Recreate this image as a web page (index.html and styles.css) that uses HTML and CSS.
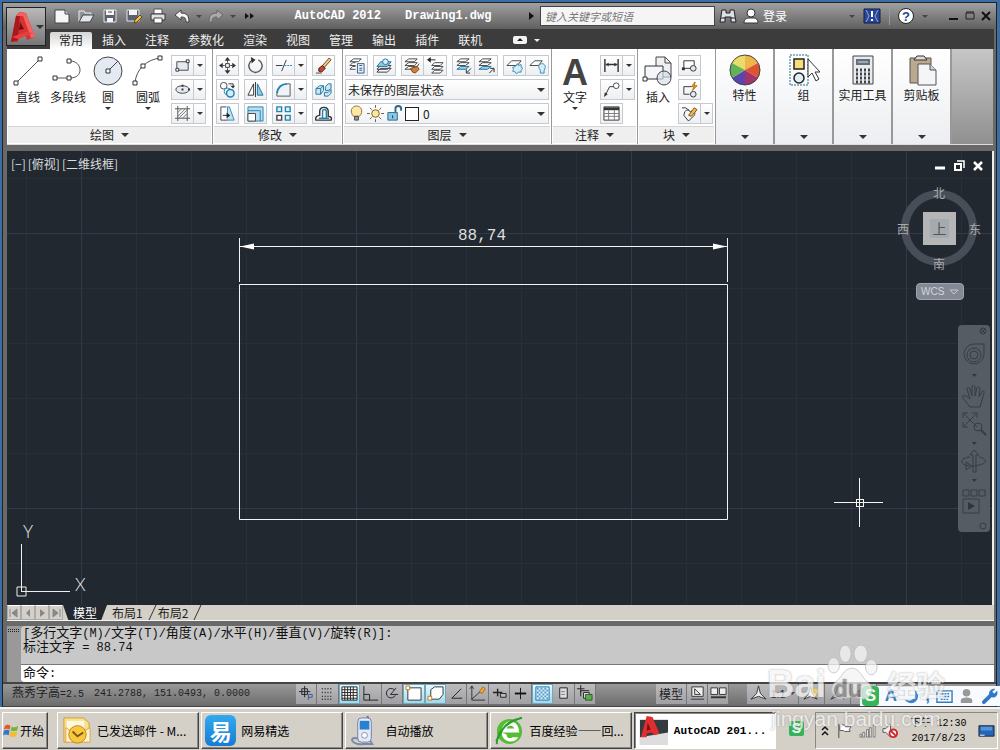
FILE: index.html
```
<!DOCTYPE html>
<html lang="zh-CN">
<head>
  <meta charset="UTF-8" />
  <meta name="viewport" content="width=device-width, initial-scale=1.0"/>
  <title>AutoCAD 2012 Drawing1.dwg</title>
  <link rel="stylesheet" href="styles.css">
</head>
<body>
  <div class="window">
    <header class="titlebar">
      <div class="quick">
        <button aria-label="新建"><svg viewBox="0 0 18 18"><path d="M2 3h10l4 4v9H2z" fill="#f4f6f8" stroke="#444"/><path d="M12 3v4h4" fill="#cdd3da" stroke="#444"/></svg></button>
        <button aria-label="打开"><svg viewBox="0 0 18 18"><path d="M2 15V4h5l1 2h6v3" fill="#8d949c" stroke="#eee"/><path d="M2 15l4-7h11l-4 7z" fill="#e3e6ea" stroke="#444"/></svg></button>
        <button aria-label="保存"><svg viewBox="0 0 18 18"><path d="M3 3h12v12H3z" fill="#59626e" stroke="#dfe3e8"/><path d="M5 3h8v5H5zM6 11h6v4H6z" fill="#f5f5f5"/><path d="M7 5h4" stroke="#555"/></svg></button>
        <button aria-label="另存为"><svg viewBox="0 0 18 18"><path d="M2 3h12v11H2z" fill="#59626e" stroke="#dfe3e8"/><path d="M4 3h8v5H4z" fill="#f5f5f5"/><path d="M9 16l1-3 5-5 2 2-5 5z" fill="#f2bd4a" stroke="#6b4a10"/></svg></button>
        <button aria-label="打印"><svg viewBox="0 0 18 18"><path d="M5 2h8v5H5z" fill="#fff" stroke="#555"/><path d="M2 7h14v6H2z" fill="#dfe2e5" stroke="#333"/><path d="M5 11h8v5H5z" fill="#fff" stroke="#444"/></svg></button>
        <button aria-label="放弃"><svg viewBox="0 0 18 18"><path d="M2 8l6-5v3c6 0 8 3 8 9h-3c0-4-1-5-5-5v3z" fill="#f4f4f4" stroke="#444"/></svg></button>
        <i class="arrow dim"></i>
        <button aria-label="重做"><svg viewBox="0 0 18 18"><path d="M16 8l-6-5v3c-6 0-8 3-8 9h3c0-4 1-5 5-5v3z" fill="#aaa" stroke="#666"/></svg></button>
        <i class="arrow dim"></i>
        <button class="more" aria-label="更多"><svg viewBox="0 0 18 18"><path d="M6 6l4 3-4 3zM11 6l4 3-4 3z" fill="#111"/></svg></button>
      </div>
      <h1><span>AutoCAD 2012</span><span>Drawing1.dwg</span></h1>
      <form class="search">
        <i class="arrow-right"></i>
        <input type="search" placeholder="键入关键字或短语" aria-label="搜索">
      </form>
      <div class="account">
        <button aria-label="查找"><svg viewBox="0 0 18 18"><path d="M3 3h4v3h4V3h4l2 12h-5v-5H6v5H1z" fill="#dbe0e6" stroke="#222"/><path d="M2 11h4M12 11h4" stroke="#222"/></svg></button>
        <button class="login"><svg viewBox="0 0 18 18"><path d="M2 16c0-4 3-5 5-5h4c2 0 5 1 5 5z" fill="#fff" stroke="#333"/><circle cx="9" cy="6" r="4" fill="#fff" stroke="#333"/></svg>登录</button>
      </div>
      <div class="help">
        <i class="arrow dim"></i>
        <button aria-label="交换"><svg viewBox="0 0 18 18"><path d="M1 2h16v14H1z" fill="#294796" stroke="#111c44"/><path d="M3 3l3 6-3 6M15 3l-3 6 3 6" fill="none" stroke="#89a6df"/><path d="M9 4v6M9 12v2" stroke="#fff" stroke-width="2"/></svg></button>
        <i class="sep"></i>
        <button class="question" aria-label="帮助">?</button>
        <i class="arrow dim"></i>
      </div>
      <div class="winctl">
        <button aria-label="最小化"><svg viewBox="0 0 12 12"><path d="M1 9h9" stroke="#111" stroke-width="2"/></svg></button>
        <button aria-label="最大化"><svg viewBox="0 0 12 12"><path d="M2 3h8v6H2zM2 2h8" fill="none" stroke="#222"/></svg></button>
        <button aria-label="关闭"><svg viewBox="0 0 12 12"><path d="M2 2l8 8M10 2l-8 8" stroke="#111" stroke-width="2"/></svg></button>
      </div>
    </header>

    <button class="appbtn" aria-label="应用程序菜单">
      <svg viewBox="0 0 28 34"><path d="M3 32L8 6l4-4 6 1 9 24-8 3-2-6-6 1-1 7z" fill="#d93033"/><path d="M3 32L8 6l4-4-2 28z" fill="#a8191d"/><path d="M12 12l4 7-5 1z" fill="#6d0e12"/><path d="M8 6l4-4 6 1 9 24-4 1L15 6z" fill="#f56360"/><path d="M4 27l14-5 7 1-15 6z" fill="#e9403f"/></svg>
      <i class="arrow"></i>
    </button>

    <nav class="menu">
      <a href="#" class="active">常用</a><a href="#">插入</a><a href="#">注释</a><a href="#">参数化</a><a href="#">渲染</a><a href="#">视图</a><a href="#">管理</a><a href="#">输出</a><a href="#">插件</a><a href="#">联机</a>
      <button aria-label="最小化功能区"><svg viewBox="0 0 14 8"><rect width="14" height="8" rx="2" fill="#f2f2f2"/><path d="M7 2l3 3H4z" fill="#222"/></svg></button>
      <i class="arrow light"></i>
    </nav>

    <main class="ribbon">
      <section class="panel draw">
        <div class="tools">
          <button class="big"><svg viewBox="0 0 32 32"><path d="M4 28L28 4" stroke="#555"/><path d="M2 26h4v4H2zM26 2h4v4h-4z" fill="#fff" stroke="#333"/></svg>直线</button>
          <button class="big"><svg viewBox="0 0 32 32"><path d="M3 23h15c6 0 10-3 10-8s-4-9-10-9" fill="none" stroke="#555"/><path d="M1 21h4v4H1zM15 21h4v4h-4zM15 4h4v4h-4z" fill="#fff" stroke="#333"/></svg>多段线</button>
          <button class="big"><svg viewBox="0 0 32 32"><circle cx="16" cy="16" r="14" fill="#e4eaf1" stroke="#444"/><path d="M16 16l10-10" stroke="#444"/><path d="M14 14h4v4h-4z" fill="#fff" stroke="#333"/></svg>圆<i class="arrow small"></i></button>
          <button class="big"><svg viewBox="0 0 32 32"><path d="M3 28C4 14 15 4 29 3" fill="none" stroke="#555"/><path d="M1 26h4v4H1zM9 9h4v4H9zM26 1h4v4h-4z" fill="#fff" stroke="#333"/></svg>圆弧<i class="arrow small"></i></button>
          <div class="stack">
            <button class="split" aria-label="矩形"><svg viewBox="0 0 18 18"><path d="M3 5h12v9H3z" fill="#e4eaf1" stroke="#444"/><path d="M2 12h3v3H2zM13 3h3v3h-3z" fill="#fff" stroke="#333"/></svg><i class="arrow small"></i></button>
            <button class="split" aria-label="椭圆"><svg viewBox="0 0 18 18"><ellipse cx="9" cy="9" rx="7" ry="4" fill="#e4eaf1" stroke="#444"/><path d="M8 8h2v2H8zM15 8h2v2h-2zM8 4h2v2H8z" fill="#333"/></svg><i class="arrow small"></i></button>
            <button class="split" aria-label="填充"><svg viewBox="0 0 18 18"><path d="M4 1v16M14 1v16M1 4h16M1 14h16" stroke="#555"/><path d="M4 8l4-4M4 12l8-8M5 14l9-9M9 14l5-5" stroke="#777"/></svg><i class="arrow small"></i></button>
          </div>
        </div>
        <footer>绘图<i class="arrow"></i></footer>
      </section>

      <section class="panel modify">
        <div class="tools grid">
          <button aria-label="移动"><svg viewBox="0 0 18 18"><path d="M9 0l3 4H6zM9 18l3-4H6zM0 9l4-3v6zM18 9l-4-3v6z" fill="#333"/><path d="M7 7h4v4H7z" fill="#fff" stroke="#333"/><path d="M9 4v2M9 12v2M4 9h2M12 9h2" stroke="#333"/></svg></button>
          <button aria-label="旋转"><svg viewBox="0 0 18 18"><path d="M12 3a7 7 0 1 1-6 0" fill="none" stroke="#555" stroke-width="1.500"/><path d="M4 0l5 3-4 4z" fill="#333"/></svg></button>
          <button class="split" aria-label="修剪"><svg viewBox="0 0 18 18"><path d="M1 9h7M12 3L7 15" stroke="#334"/><path d="M10 9h8" stroke="#2a7db0" stroke-dasharray="2 1"/></svg><i class="arrow small"></i></button>
          <button aria-label="删除"><svg viewBox="0 0 18 18"><path d="M8 9l7-8 2 2-7 8z" fill="#ecc983" stroke="#65461d"/><path d="M4 12l4-3 3 3-4 4-3-1z" fill="#c2452c" stroke="#541b11"/><path d="M1 17h6" stroke="#444"/></svg></button>
          <button aria-label="复制"><svg viewBox="0 0 18 18"><circle cx="5" cy="5" r="3.500" fill="#fff" stroke="#444"/><circle cx="9" cy="11" r="3.500" fill="#fff" stroke="#2582af"/><circle cx="12" cy="13" r="4" fill="#d5edf7" stroke="#2582af" stroke-width="1.500"/><path d="M10 3h5v3" fill="none" stroke="#333"/><path d="M12 5h5l-2 3z" fill="#333"/></svg></button>
          <button aria-label="镜像"><svg viewBox="0 0 18 18"><path d="M7 3v12H1z" fill="#fff" stroke="#333"/><path d="M11 3v12h6z" fill="#8fcce6" stroke="#21719c"/><path d="M9 1v16" stroke="#333"/></svg></button>
          <button class="split" aria-label="圆角"><svg viewBox="0 0 18 18"><path d="M2 16V13C3 7 7 3 14 3h2v13z" fill="#eef3f7"/><path d="M2 13C3 7 7 3 13 3" fill="none" stroke="#2480ad" stroke-width="2"/><path d="M13 3h3v13H2v-3" fill="none" stroke="#555"/></svg><i class="arrow small"></i></button>
          <button aria-label="分解"><svg viewBox="0 0 18 18"><path d="M1 8l4-3h4v5l-3 4H1zM1 8h5v6M6 8l3-3M11 6l3-3h3v5l-3 2h-3zM10 12h4l3-3v4l-3 3h-4z" fill="#c8e8f5" stroke="#24749f"/></svg></button>
          <button aria-label="拉伸"><svg viewBox="0 0 18 18"><path d="M11 2l5 14H9V2z" fill="#c4e3f2" stroke="#318bb7"/><path d="M8 2H2v14h7" fill="#fff" stroke="#444"/><path d="M4 11h6" stroke="#222"/><path d="M8 8l4 3-4 3z" fill="#222"/></svg></button>
          <button aria-label="缩放"><svg viewBox="0 0 18 18"><path d="M1 2h16v15H1z" fill="#b8dff0" stroke="#2c84b0"/><path d="M1 6h13v11" fill="none" stroke="#2c84b0"/><path d="M1 9h8v8H1z" fill="#fff" stroke="#444"/></svg></button>
          <button class="split" aria-label="阵列"><svg viewBox="0 0 18 18"><path d="M11 2h5v5h-5zM11 11h5v5h-5zM2 2h5v5H2z" fill="#dff1f8" stroke="#2582af" stroke-width="1.500"/><path d="M2 11h5v5H2z" fill="#fff" stroke="#444" stroke-width="1.500"/></svg><i class="arrow small"></i></button>
          <button aria-label="偏移"><svg viewBox="0 0 18 18"><path d="M1 16h16c1-2 0-4-3-4V7c0-6-9-6-9 0v4c-3 0-5 2-4 5z" fill="#fff" stroke="#333" stroke-width="1.500"/><path d="M4 14h11M8 14V7c0-3 4-3 4 0v7" fill="none" stroke="#2481ae" stroke-width="1.500"/></svg></button>
        </div>
        <footer>修改<i class="arrow"></i></footer>
      </section>

      <section class="panel layers">
        <div class="tools col">
          <div class="line">
            <button aria-label="图层特性"><svg viewBox="0 0 18 18"><path d="M2 5l4-3h8l-3 3zM8 6H5L2 9h6M8 10H5l-3 3h6" fill="#fff" stroke="#444"/><path d="M10 7h7v10h-7z" fill="#e3edf7" stroke="#355a86"/><path d="M12 9h3M12 12h3M12 14h3" stroke="#355a86"/></svg></button>
            <button aria-label="置为当前"><svg viewBox="0 0 18 18"><path d="M1 16l4-4h11l-4 4zM1 13l4-4h11l-4 4z" fill="#fff" stroke="#333"/><path d="M1 10l4-5h11l-4 5z" fill="#8ccbe5" stroke="#226f99"/><circle cx="10" cy="5" r="3" fill="#d8eff9" stroke="#226f99"/></svg></button>
            <span class="pair">
              <button aria-label="匹配"><svg viewBox="0 0 18 18"><path d="M1 13l4-3h9l-3 3zM1 9l4-3h9l-3 3zM1 5l4-3h9l-3 3z" fill="#fff" stroke="#444"/><path d="M16 7l-2 3" stroke="#444"/><path d="M7 12l7-2 2 3-4 4-3-1z" fill="#cf7f3b" stroke="#7a4512"/></svg></button>
              <button aria-label="上一个"><svg viewBox="0 0 18 18"><path d="M5 17l3-3h9l-3 3zM5 13l3-3h9l-3 3zM5 9l3-3h9l-3 3z" fill="#fff" stroke="#444"/><path d="M3 3h6" stroke="#222"/><path d="M0 3l4-3v6z" fill="#222"/></svg></button>
            </span>
            <span class="pair">
              <button aria-label="隔离"><svg viewBox="0 0 18 18"><path d="M2 9l4-3h9l-4 3zM2 5l4-3h9l-4 3z" fill="#fff" stroke="#444"/><path d="M2 13l4-3h9l-4 3z" fill="#9bd3ea" stroke="#226f99"/><path d="M17 12l-4 4M12 13v4h4" fill="none" stroke="#222"/></svg></button>
              <button aria-label="取消隔离"><svg viewBox="0 0 18 18"><path d="M1 9l4-3h9l-4 3zM1 5l4-3h9l-4 3z" fill="#fff" stroke="#444"/><path d="M1 13l4-3h9l-4 3z" fill="#9bd3ea" stroke="#226f99"/><path d="M12 17l4-4M13 12h4v4" fill="none" stroke="#222"/></svg></button>
            </span>
            <span class="pair">
              <button aria-label="冻结"><svg viewBox="0 0 18 18"><path d="M1 9l5-5h10l-4 5z" fill="#fff" stroke="#444"/><path d="M12 7l1 2 3-1v3l2 1-2 2v2h-3l-2 2-1-2-3-1 1-2-1-2 3-1z" fill="#d5edf8" stroke="#398bb4"/></svg></button>
              <button aria-label="关闭图层"><svg viewBox="0 0 18 18"><path d="M1 9l5-5h8l-4 5z" fill="#fff" stroke="#444"/><path d="M12 14c-4-5 0-7 2-7s5 3 2 7v3h-4z" fill="#d5edf8" stroke="#398bb4"/></svg></button>
            </span>
          </div>
          <label class="combo"><select aria-label="图层状态"><option>未保存的图层状态</option></select><i class="arrow"></i></label>
          <label class="combo icons">
            <svg viewBox="0 0 18 18"><path d="M6 12c-5-5-2-11 3-11s8 6 3 11z" fill="#fce9a7" stroke="#93702c"/><path d="M7 12h4v4H7z" fill="#999" stroke="#444"/></svg>
            <svg viewBox="0 0 18 18"><circle cx="9" cy="9" r="4" fill="#fde7a0" stroke="#6d5a2c"/><path d="M9 0v3M9 15v3M0 9h3M15 9h3M3 3l2 2M13 13l2 2M15 3l-2 2M3 15l2-2" stroke="#6d5a2c"/></svg>
            <svg viewBox="0 0 18 18"><path d="M10 8V4c0-4 6-4 6 0v2" fill="none" stroke="#2b698f" stroke-width="2"/><path d="M2 8h10v8H2z" fill="#89c9e6" stroke="#2b698f"/><path d="M7 11v3" stroke="#234"/></svg>
            <span class="swatch"></span>
            <select aria-label="当前图层"><option>0</option></select><i class="arrow"></i>
          </label>
        </div>
        <footer>图层<i class="arrow"></i></footer>
      </section>

      <section class="panel annotate">
        <div class="tools">
          <button class="big"><b class="letter">A</b>文字<i class="arrow small"></i></button>
          <div class="stack">
            <button class="split" aria-label="线性"><svg viewBox="0 0 18 18"><path d="M2 2v14M16 2v14M3 8h12" stroke="#333" stroke-width="1.500"/><path d="M3 8l3-2v4zM15 8l-3-2v4z" fill="#333"/></svg><i class="arrow small"></i></button>
            <button class="split" aria-label="引线"><svg viewBox="0 0 18 18"><circle cx="14" cy="5" r="3" fill="#fff" stroke="#444"/><path d="M11 6H7L3 14" fill="none" stroke="#333"/><path d="M1 17l1-5 3 2z" fill="#333"/></svg><i class="arrow small"></i></button>
            <button aria-label="表格"><svg viewBox="0 0 18 18"><path d="M1 2h16v14H1z" fill="#fff" stroke="#333"/><path d="M1 4h16" stroke="#333" stroke-width="3"/><path d="M1 9h16M1 12h16M6 5v11M12 5v11" stroke="#777"/></svg></button>
          </div>
        </div>
        <footer>注释<i class="arrow"></i></footer>
      </section>

      <section class="panel block">
        <div class="tools">
          <button class="big"><svg viewBox="0 0 32 32"><path d="M14 2h9l6 6v14H14z" fill="#eef0f3" stroke="#444"/><path d="M23 2v6h6" fill="none" stroke="#444"/><path d="M3 11h18v13H3z" fill="#f4f6f9" stroke="#333"/><circle cx="22" cy="23" r="7" fill="#d5dfe9aa" stroke="#444"/><path d="M1 22h4v4H1z" fill="#fff" stroke="#333"/></svg>插入</button>
          <div class="stack">
            <button aria-label="创建"><svg viewBox="0 0 18 18"><path d="M3 13V4h11v5" fill="#fff" stroke="#333"/><path d="M3 12h7" stroke="#333"/><circle cx="13" cy="12" r="3" fill="#e3e9ef" stroke="#333"/><path d="M1 11h3v3H1z" fill="#333"/></svg></button>
            <button aria-label="编辑"><svg viewBox="0 0 18 18"><path d="M3 14V6h8M3 14h6" fill="none" stroke="#333"/><circle cx="13" cy="14" r="3" fill="#e3e9ef" stroke="#333"/><path d="M15 1l-4 5h3l-2 4 5-5h-3z" fill="#f4ae2d" stroke="#b06b12"/></svg></button>
            <button class="split" aria-label="编辑属性"><svg viewBox="0 0 18 18"><path d="M1 3h4l4 3M4 7c3-3 4-1 6 0 3-2 6 1 4 4l-6 6-5-6z" fill="#f5f6f8" stroke="#333"/><path d="M8 11l6-8 3 2-6 7z" fill="#f3ba4d" stroke="#795115"/></svg><i class="arrow small"></i></button>
          </div>
        </div>
        <footer>块<i class="arrow"></i></footer>
      </section>

      <button class="folded">
        <svg viewBox="0 0 32 32"><path d="M16 16V1a15 15 0 0 1 13 8z" fill="#eeb54a"/><path d="M16 16L3 9A15 15 0 0 1 16 1z" fill="#eadc67"/><path d="M16 16L29 9a15 15 0 0 1 0 15z" fill="#dd542f"/><path d="M16 16L29 24a15 15 0 0 1-13 7z" fill="#a23469"/><path d="M16 16v15A15 15 0 0 1 3 24z" fill="#5a45ac"/><path d="M16 16L3 24A15 15 0 0 1 3 9z" fill="#64b258"/><circle cx="16" cy="16" r="15" fill="none" stroke="#444"/></svg>
        特性<i class="arrow"></i></button>
      <button class="folded">
        <svg viewBox="0 0 32 32"><path d="M2 1h18v30H2z" fill="none" stroke="#246d91" stroke-dasharray="2 1"/><path d="M6 5h10v10H6z" fill="#f6dd7c" stroke="#222" stroke-width="1.500"/><circle cx="11" cy="24" r="5" fill="#e2edf4" stroke="#222" stroke-width="1.500"/><path d="M20 5v18l4-4 4 8 3-2-4-7h5z" fill="#fff" stroke="#333"/></svg>
        组<i class="arrow"></i></button>
      <button class="folded">
        <svg viewBox="0 0 32 32"><path d="M6 2h20v28H6z" fill="#e8ebef" stroke="#444"/><path d="M9 5h14v6H9z" fill="#65717e"/><path d="M11 8h10" stroke="#ddd"/><path d="M9 16h14M9 20h14M9 24h14M9 28h14" stroke="#444" stroke-width="3" stroke-dasharray="2 2"/></svg>
        实用工具<i class="arrow"></i></button>
      <button class="folded">
        <svg viewBox="0 0 32 32"><path d="M4 4h21v25H4z" fill="#bba98f" stroke="#555"/><path d="M8 6l3-4h7l3 4z" fill="#ddd" stroke="#333"/><path d="M12 10h12l6 6v15H12z" fill="#f4f5f7" stroke="#555"/><path d="M24 10v6h6" fill="#ccd2d9" stroke="#555"/></svg>
        剪贴板<i class="arrow"></i></button>
      <div class="filler"></div>
    </main>

    <section class="canvas">
      <svg class="drawing" aria-label="图形">
        <g fill="none" stroke="#f4f4f4">
          <path d="M232.500 133.500h488v235h-488z"/>
          <path d="M232.500 87v44M720.500 87v44M233 95.500h487"/>
          <path d="M827 351.500h49M852.500 327v49M849 348h7v7h-7z" shape-rendering="crispEdges"/>
        </g>
        <path d="M233 95.500l14-3v6zM720 95.500l-14-3v6z" fill="#fff"/>
        <text x="451" y="89">88,74</text>
      </svg>
      <div class="view"><a href="#">[−]</a><a href="#">[俯视]</a><a href="#">[二维线框]</a></div>
      <div class="docctl">
        <button aria-label="最小化"><svg viewBox="0 0 12 12"><path d="M1 8h10" stroke="#fff" stroke-width="3"/></svg></button>
        <button aria-label="还原"><svg viewBox="0 0 12 12"><path d="M4 1h7v7" fill="none" stroke="#fff" stroke-width="1.500"/><path d="M2 4h6v6H2z" fill="none" stroke="#fff" stroke-width="2"/></svg></button>
        <button aria-label="关闭"><svg viewBox="0 0 12 12"><path d="M2 2l8 8M10 2l-8 8" stroke="#fff" stroke-width="2.500"/></svg></button>
      </div>
      <div class="cube">
        <span class="n">北</span><span class="w">西</span><b>上</b><span class="e">东</span><span class="s">南</span>
      </div>
      <button class="wcs">WCS <svg viewBox="0 0 10 6"><path d="M1 1h8L5 5z" fill="none" stroke="#c3c7d2"/></svg></button>
      <div class="navbar">
        <svg viewBox="0 0 32 207">
          <g fill="none" stroke="#363c43">
            <circle cx="25" cy="6" r="3"/><path d="M23 4l4 4M27 4l-4 4"/>
            <path d="M16 19h10v11a10 10 0 1 1-10-11z"/><circle cx="16" cy="30" r="7"/><circle cx="16" cy="30" r="4"/>
            <path d="M12 82l-7-9c-1-2 1-3 3-2l4 3-3-10c0-2 2-2 3 0l2 7V62c0-2 3-2 3 0v9l2-8c1-2 3-1 3 1l-1 8 3-5c1-2 3-1 2 1l-4 14z"/>
            <path d="M5 88l14 14M19 88L5 102M5 93v-5h5M14 88h5v5M5 97v5h5"/><circle cx="20" cy="102" r="4"/><path d="M23 105l5 5" stroke-width="2"/>
            <path d="M16 125l-4 5h3v17h3v-17h3z"/><path d="M12 132c-11 1-11 8 0 9M21 132c10 2 9 8-7 9M8 137l6 4-6 4z"/>
            <path d="M5 165h6v6H5zM13 165h6v6h-6zM21 165h6v6h-6zM5 174h16v14H5z"/><circle cx="25" cy="201" r="3"/>
          </g>
          <path d="M14 49h5l-3 3zM14 117h5l-3 3zM14 154h5l-3 3zM10 177l7 4-7 4z" fill="#30363d"/>
        </svg>
      </div>
      <svg class="ucs" viewBox="0 0 90 84">
        <path d="M14.500 23v48M15 70.500h48M10 66h9v9h-9z" fill="none" stroke="#eee"/>
        <text x="16" y="17">Y</text><text x="68" y="70">X</text>
      </svg>
    </section>

    <nav class="layouts">
      <button aria-label="首个"><svg viewBox="0 0 12 12"><path d="M2 2v8M9 2v8L4 6z" fill="#888" stroke="#888"/></svg></button>
      <button aria-label="上一个"><svg viewBox="0 0 12 12"><path d="M8 2v8L4 6z" fill="#888"/></svg></button>
      <button aria-label="下一个"><svg viewBox="0 0 12 12"><path d="M4 2v8l5-4z" fill="#888"/></svg></button>
      <button aria-label="末个"><svg viewBox="0 0 12 12"><path d="M10 2v8M3 2v8l5-4z" fill="#888" stroke="#888"/></svg></button>
      <a href="#" class="active">模型</a><a href="#">布局1</a><a href="#">布局2</a>
    </nav>

    <section class="command">
      <div class="grip"></div>
      <div class="console">
        <p>[<span>多行文字</span>(M)/<span>文字</span>(T)/<span>角度</span>(A)/<span>水平</span>(H)/<span>垂直</span>(V)/<span>旋转</span>(R)]:</p>
        <p><span>标注文字</span> = 88.74</p>
        <label><span>命令</span>:<input type="text" id="cmd"></label>
      </div>
    </section>

    <section class="status">
      <span class="textheight">燕秀字高<span class="num">=2.5</span></span>
      <span class="num coords">241.2788, 151.0493, 0.0000</span>
      <div class="toggles">
        <button aria-label="推断约束"><svg viewBox="0 0 18 18"><path d="M1 7h12M7 1v12M4 4h6v6H4z" fill="none" stroke="#222"/><path d="M11 16v-6h4v3h-4" fill="none" stroke="#345c8c"/></svg></button>
        <button aria-label="捕捉"><svg viewBox="0 0 18 18"><path d="M3 4h12M3 8h12M3 12h12M3 15h12" stroke="#222" stroke-width="1.500" stroke-dasharray="1 2"/></svg></button>
        <button class="on" aria-label="栅格"><svg viewBox="0 0 18 18"><path d="M1 2h16v14H1zM4 2v14M7 2v14M10 2v14M13 2v14M1 5h16M1 8h16M1 11h16M1 14h16" fill="#fff" stroke="#222"/></svg></button>
        <button aria-label="正交"><svg viewBox="0 0 18 18"><path d="M2 1v15h15M2 10h6v6" fill="none" stroke="#222"/></svg></button>
        <button aria-label="极轴"><svg viewBox="0 0 18 18"><path d="M12 5a5 5 0 1 0 1 6M8 10h8M8 10l6-7" fill="none" stroke="#222"/></svg></button>
        <button class="on" aria-label="对象捕捉"><svg viewBox="0 0 18 18"><path d="M3 3h14v13H3z" fill="#fff" stroke="#333"/><path d="M1 1h4v4H1z" fill="#fff" stroke="#c67a19"/></svg></button>
        <button class="on" aria-label="三维捕捉"><svg viewBox="0 0 18 18"><path d="M4 5l4-3h9v8l-4 5H4z" fill="#fff" stroke="#333"/><path d="M1 12h4v4H1z" fill="#fff" stroke="#c67a19"/></svg></button>
        <button aria-label="追踪"><svg viewBox="0 0 18 18"><path d="M14 4L4 14h11" fill="none" stroke="#222"/></svg></button>
        <button aria-label="动态坐标系"><svg viewBox="0 0 18 18"><path d="M3 1v15h14M3 15L13 6M1 4l2-3 2 3" fill="none" stroke="#333"/><path d="M11 7l4-5 2 2-3 5z" fill="#f5ae2d" stroke="#ae6611"/></svg></button>
        <button aria-label="动态输入"><svg viewBox="0 0 18 18"><path d="M2 8h10M7 4v8" stroke="#222" stroke-width="1.500"/><path d="M10 9h6v4h-6z" fill="#bbb" stroke="#222"/></svg></button>
        <button aria-label="线宽"><svg viewBox="0 0 18 18"><path d="M9 3v12" stroke="#111"/><path d="M3 9h12" stroke="#111" stroke-width="2"/></svg></button>
        <button class="on" aria-label="透明度"><svg viewBox="0 0 18 18"><path d="M2 2h14v14H2z" fill="#d5efff" stroke="#2370a2"/><path d="M3 4h12M3 8h12M3 12h12" stroke="#5d9dc8" stroke-width="2" stroke-dasharray="2 2"/><path d="M5 6h10M5 10h10M5 14h10" stroke="#5d9dc8" stroke-width="2" stroke-dasharray="2 2"/></svg></button>
        <button aria-label="快捷特性"><svg viewBox="0 0 18 18"><path d="M5 3h8v11H5z" fill="#ddd" stroke="#222"/><path d="M7 7h4M7 10h4" stroke="#222" stroke-dasharray="1 1"/></svg></button>
        <button aria-label="选择循环"><svg viewBox="0 0 18 18"><path d="M1 4h8M5 0v8M5 12V6h9" fill="none" stroke="#222"/><path d="M8 8h6v6H8z" fill="#eee" stroke="#222"/><path d="M10 10h7v6h-7z" fill="#5eaa4e" stroke="#275e20"/></svg></button>
      </div>
      <div class="space">
        <button>模型</button>
        <button aria-label="图纸"><svg viewBox="0 0 18 18"><path d="M3 2h12v10H3z" fill="#eee" stroke="#333"/><path d="M6 4v6h6zM2 15h14" fill="none" stroke="#333"/></svg></button>
        <button aria-label="快速查看"><svg viewBox="0 0 18 18"><path d="M1 3h7v7H1zM10 3h7v7h-7z" fill="#eee" stroke="#333"/><path d="M1 13h16" stroke="#333" stroke-width="2"/></svg></button>
        <i class="gap"></i>
        <button class="scale"><svg viewBox="0 0 18 18"><path d="M9 1l2 8 6 6-8-3-8 3 6-6z" fill="#eee" stroke="#333"/></svg>1:1<i class="arrow small"></i></button>
        <button aria-label="注释可见性"><svg viewBox="0 0 18 18"><path d="M8 2l2 7 5 6-7-3-7 3 5-6z" fill="#eee" stroke="#333"/><circle cx="13" cy="7" r="3" fill="#f6d257"/></svg></button>
        <button aria-label="自动缩放"><svg viewBox="0 0 18 18"><path d="M9 2l2 7 5 6-7-3-7 3 5-6z" fill="#ccc" stroke="#333"/></svg></button>
        <button aria-label="切换工作空间"><svg viewBox="0 0 18 18"><circle cx="9" cy="9" r="5" fill="none" stroke="#333" stroke-width="3" stroke-dasharray="3 1"/></svg></button>
      </div>
    </section>
  </div>

  <footer class="taskbar">
    <button class="start"><svg viewBox="0 0 18 18"><path d="M2 4c3-2 4-1 6 0L7 8C5 7 3 7 1 8z" fill="#e35a28"/><path d="M9 5c2 1 4 1 7-1l-1 5c-3 1-4 1-7 0z" fill="#75b72f"/><path d="M1 9c2-1 4-1 6 0l-1 5c-2-1-4-1-6 0z" fill="#3478c9"/><path d="M8 10c2 1 4 1 7 0l-1 5c-3 1-5 1-7 0z" fill="#f2bd2e"/></svg>开始</button>
    <div class="tasks">
      <button><svg viewBox="0 0 32 32"><path d="M3 3h20l6 5v20H3z" fill="#f8df91" stroke="#d79b27"/><path d="M6 6h18v9H6z" fill="#fff8df"/><path d="M5 13l11 8 14-8v15H5z" fill="#fff6da" stroke="#dda53c"/><circle cx="17" cy="20" r="9" fill="#f8c83e" stroke="#c78312"/><path d="M12 17l5 5 6-4" fill="none" stroke="#7a5513" stroke-width="2"/></svg>已发送邮件 - M...</button>
      <button><span class="yi">易</span>网易精选</button>
      <button><svg viewBox="0 0 32 32"><path d="M19 1l2 6" stroke="#657089" stroke-width="2"/><path d="M11 25c-12-5-10 7 4 5h9l-3-5" fill="none" stroke="#7c89a8" stroke-width="2"/><rect x="9" y="3" width="14" height="25" rx="4" fill="#e6eaf6" stroke="#7080a4"/><path d="M11 6h10v9H11z" fill="#2c80d0"/><circle cx="16" cy="21" r="3" fill="#fff" stroke="#8390ac"/></svg>自动播放</button>
      <button><svg viewBox="0 0 32 32"><circle cx="16" cy="17" r="13" fill="#54bd35"/><path d="M8 18h18c0-15-18-15-18 0 0 11 14 12 17 5h-6c-2 2-6 1-6-3" fill="#fff"/><path d="M13 14h8c-1-4-7-4-8 0z" fill="#54bd35"/><path d="M2 27c5-4 4-20 27-24M3 30C2 20 12 7 29 3" fill="none" stroke="#2f9b28" stroke-width="2"/></svg>百度经验——回...</button>
      <button class="current"><svg viewBox="0 0 32 32"><path d="M2 5h29v26H2z" fill="#333b3f"/><path d="M2 23l29-5v13H2z" fill="#ddd"/><path d="M3 23L9 1l6 1 7 17-5 2-3-3-5 1v4z" fill="#df2d30"/><path d="M10 8l3 7-4 1z" fill="#740e12"/></svg>AutoCAD 201...</button>
    </div>
    <div class="sogou">S</div>
    <div class="tray">
      <svg class="chev" viewBox="0 0 10 14"><path d="M2 6l3-3 3 3M2 11l3-3 3 3" fill="none" stroke="#111" stroke-width="1.500"/></svg>
      <svg viewBox="0 0 18 18"><path d="M3 2v15" stroke="#444"/><path d="M4 3h5l1 2h6l-2 3 1 2H9L8 9H4z" fill="#fff" stroke="#555"/></svg>
      <svg viewBox="0 0 18 18"><path d="M1 13h2v3H1zM4 11h2v5H4zM8 8h2v8H8zM11 6h2v10h-2zM15 3h2v13h-2z" fill="#eee" stroke="#555" stroke-width=".7"/></svg>
      <svg viewBox="0 0 18 18"><path d="M1 7h3l5-5v14l-5-5H1z" fill="#eee" stroke="#555"/><circle cx="12" cy="12" r="4" fill="#fff" stroke="#d0272a" stroke-width="2"/><path d="M9 9l6 6" stroke="#d0272a" stroke-width="2"/></svg>
      <time>下午 12:30<br>2017/8/23</time>
      <svg viewBox="0 0 18 18"><path d="M1 4h16v11H1z" fill="#2266b8" stroke="#222"/><path d="M3 5h12v4H3z" fill="#5594dc"/><path d="M2 14h5" stroke="#fff"/></svg>
    </div>
  </footer>

  <div class="ime">
    <b class="s">S</b><b>A</b>
    <svg viewBox="0 0 18 18"><path d="M12 2c4 8-4 14-10 10 2 6 14 6 14-4 0-3-2-5-4-6z" fill="#3c83cd"/></svg>
    <b>,</b>
    <svg viewBox="0 0 18 18"><path d="M1 3h16v12H1z" fill="none" stroke="#347dbd" stroke-width="1.500"/><path d="M3 6h12M3 9h12M5 12h8" stroke="#347dbd" stroke-width="1.500" stroke-dasharray="2 1"/></svg>
    <svg viewBox="0 0 18 18"><circle cx="9" cy="5" r="4" fill="#999"/><path d="M3 16v-3c0-4 12-4 12 0v3z" fill="#999"/></svg>
    <svg viewBox="0 0 18 18"><path d="M3 15l7-7" stroke="#2e79c4" stroke-width="4" stroke-linecap="round"/><path d="M15 1l-3 3 2 2 3-3c2 5-3 9-7 6-4-4 1-9 5-8z" fill="#2e79c4"/></svg>
  </div>

  <div class="watermark">
    <svg viewBox="0 0 56 60"><g fill="#f3f3f3" stroke="#bbb"><ellipse cx="8" cy="22" rx="6" ry="8"/><ellipse cx="20" cy="10" rx="6" ry="9"/><ellipse cx="36" cy="10" rx="7" ry="9"/><ellipse cx="47" cy="24" rx="6" ry="8"/><path d="M27 25c8 0 10 10 17 15 8 7 2 18-7 17-7-2-14-2-20 0-9 1-15-10-8-17 8-5 9-15 18-15z"/></g></svg>
    <div class="brand"><span>Bai</span><span class="du">du</span><span class="jy">经验</span></div>
    <div class="site">jingyan.baidu.com</div>
  </div>
</body>
</html>
```
FILE: styles.css
```
* {
  box-sizing: border-box;
}

body {
  margin: 0;
  min-height: 100vh;
  display: flex;
  flex-direction: column;
  position: relative;
  overflow: hidden;
  background: #3b6ea5;
  font: 12px/14px "Noto Sans CJK SC", sans-serif;
  color: #222;
}

button {
  font: inherit;
  color: inherit;
  background: none;
  border: none;
  padding: 0;
}

a {
  color: inherit;
  text-decoration: none;
}

svg {
  display: block;
  flex: none;
}

.arrow {
  flex: none;
  width: 0;
  height: 0;
  border: 4px solid transparent;
  border-top-color: #333;
  border-bottom: 0;
}

.arrow.small {
  border-width: 3px;
  border-bottom: 0;
}

.arrow.dim {
  border-width: 3px;
  border-bottom: 0;
  border-top-color: #444;
}

.arrow.light {
  border-width: 3px;
  border-bottom: 0;
  border-top-color: #eee;
}

.window {
  flex: 1;
  display: flex;
  flex-direction: column;
  position: relative;
  margin: 2px 3px 0 2px;
  padding: 0 2px 0 4px;
  border: 1px solid #222;
  border-bottom: 0;
  background: #696969;
}

/* title bar */
.titlebar {
  display: flex;
  align-items: center;
  height: 26px;
  margin: 0 -2px 0 -4px;
  padding: 0 4px 0 50px;
  background: linear-gradient(#a0a0a0, #606060);
}

.titlebar button {
  display: flex;
  align-items: center;
}

.titlebar svg {
  width: 18px;
  height: 18px;
}

.quick {
  display: flex;
  align-items: center;
  gap: 6px;
}

.quick .arrow {
  margin: 0 -1px;
}

.quick .more {
  margin-left: -2px;
}

.titlebar h1 {
  display: flex;
  justify-content: center;
  gap: 24px;
  flex: 1;
  margin: 0;
  font: bold 12px "Liberation Mono", monospace;
  color: #fff;
  white-space: nowrap;
}

.search {
  display: flex;
  align-items: center;
  gap: 6px;
}

.arrow-right {
  border: 4px solid transparent;
  border-left: 5px solid #111;
  border-right: 0;
}

.search input {
  width: 175px;
  height: 20px;
  padding: 0 4px;
  border: 1px solid #444;
  background: #f5f5f5;
  font: italic 11px "Noto Sans CJK SC", sans-serif;
}

.search input::placeholder {
  color: #777;
}

.account {
  display: flex;
  gap: 5px;
  margin-left: 4px;
  color: #fff;
}

.login {
  gap: 3px;
}

.help {
  display: flex;
  align-items: center;
  gap: 8px;
  margin-left: 62px;
}

.sep {
  width: 1px;
  height: 18px;
  background: #999;
}

.titlebar .question {
  justify-content: center;
  width: 16px;
  height: 16px;
  border: 1px solid #222;
  border-radius: 50%;
  background: #fff;
  color: #24468c;
  font: bold 13px "Liberation Sans", sans-serif;
}

.winctl {
  display: flex;
  gap: 4px;
  margin-left: 20px;
}

.winctl svg {
  width: 12px;
  height: 12px;
}

.appbtn {
  position: absolute;
  top: 4px;
  left: 3px;
  display: flex;
  align-items: center;
  width: 40px;
  height: 39px;
  padding-left: 1px;
  border: 1px solid #222;
  background: linear-gradient(#b9b9b9, #777);
}

.appbtn svg {
  width: 28px;
  height: 34px;
}

/* ribbon tabs */
.menu {
  display: flex;
  align-items: flex-end;
  gap: 1px;
  height: 20px;
  padding-left: 43px;
  background: #3c3c3c;
  color: #eee;
}

.menu a {
  padding: 1px 9px 2px;
  line-height: 14px;
}

.menu a.active {
  background: linear-gradient(#d5d5d5, #fff);
  color: #222;
  border-radius: 2px 2px 0 0;
}

.menu button {
  margin: 0 6px 5px 21px;
}

.menu button svg {
  width: 14px;
  height: 8px;
}

.menu .arrow {
  margin-bottom: 7px;
}

/* ribbon */
.ribbon {
  display: flex;
  height: 96px;
  margin-right: 1px;
  background: #fff;
  border-bottom: 1px solid #ddd;
}

.panel {
  display: flex;
  flex-direction: column;
  flex: none;
  padding: 6px 2px 1px;
  border-right: 1px solid #999;
}

.panel.draw { width: 206px; }
.panel.modify { width: 130px; }
.panel.layers { width: 209px; }
.panel.annotate { width: 86px; }
.panel.block { width: 78px; }

.tools {
  display: flex;
  flex: 1;
}

.tools.grid {
  display: grid;
  grid-template-columns: 23px 23px 35px 23px;
  grid-auto-rows: 21px;
  gap: 3px 5px;
  padding-left: 1px;
}

.tools.col,
.stack {
  display: flex;
  flex-direction: column;
  gap: 3px;
}

.stack {
  align-items: flex-start;
  margin-left: 4px;
}

.draw .tools {
  margin-left: -1px;
}

.draw .stack {
  margin-left: 3px;
}

.panel footer {
  display: flex;
  align-items: center;
  justify-content: center;
  gap: 7px;
  height: 17px;
  margin: 0 -1px;
  border-top: 1px solid #d5d5d5;
  background: #efefef;
}

.tools button {
  display: flex;
  align-items: center;
  justify-content: center;
  width: 23px;
  height: 21px;
  border: 1px solid #c6cad0;
  background: linear-gradient(#fff, #edeff2);
}

.tools button svg {
  width: 17px;
  height: 17px;
}

.tools button.split {
  justify-content: space-between;
  width: 35px;
  padding: 0 2px;
  background: linear-gradient(90deg, transparent 21px, #c6cad0 21px, #c6cad0 22px, transparent 22px), linear-gradient(#fff, #edeff2);
}

.tools button.big {
  flex-direction: column;
  justify-content: flex-start;
  width: 40px;
  height: 60px;
  border: none;
  background: none;
  white-space: nowrap;
}

.tools button.big svg {
  width: 32px;
  height: 32px;
  margin-bottom: 3px;
}

.big .arrow {
  margin-top: 3px;
}

.big .letter {
  height: 35px;
  font: bold 36px/36px "Liberation Sans", sans-serif;
  color: #444;
}

.line {
  display: flex;
  justify-content: space-between;
}

.pair {
  display: flex;
}

.pair button + button {
  border-left: 0;
}

.combo {
  display: flex;
  align-items: center;
  height: 21px;
  padding: 0 3px 0 2px;
  border: 1px solid #c6cad0;
  background: linear-gradient(#fff, #f0f1f3);
}

.combo select {
  flex: 1;
  padding: 0;
  border: 0;
  background: none;
  appearance: none;
  font: 12px/18px "Noto Sans CJK SC", sans-serif;
  color: #222;
}

.combo.icons {
  gap: 2px;
}

.combo svg {
  width: 17px;
  height: 17px;
}

.swatch {
  width: 14px;
  height: 14px;
  margin-right: 2px;
  border: 1px solid #222;
  background: #fff;
}

.annotate .big,
.block .big {
  flex: none;
}

.annotate .big {
  margin-left: 1px;
}

.annotate .stack {
  margin-left: 5px;
}

.block .tools {
  margin-left: -2px;
}

.block .stack {
  margin-left: 0;
}

.folded {
  display: flex;
  flex-direction: column;
  align-items: center;
  flex: none;
  width: 59px;
  padding: 5px 0;
  border-right: 2px solid #999;
  background: linear-gradient(#fff, #eceef1);
}

.folded svg {
  width: 32px;
  height: 32px;
  margin-bottom: 2px;
}

.folded .arrow {
  margin-top: auto;
}

.filler {
  flex: 1;
  background: linear-gradient(#c6c6c6, #909090);
}

/* drawing area */
.canvas {
  flex: 1;
  position: relative;
  margin: 6px 0 0;
  border-right: 2px solid #eee;
  background-color: #212830;
  background-image:
    linear-gradient(90deg, #303a4c 1px, transparent 1px),
    linear-gradient(#303a4c 1px, transparent 1px),
    linear-gradient(90deg, #272f39 1px, transparent 1px),
    linear-gradient(#272f39 1px, transparent 1px);
  background-size: 275px 275px, 275px 275px, 55px 55px, 55px 55px;
  background-position: 74px 82px, 74px 82px, 19px 27px, 19px 27px;
}

.drawing {
  position: absolute;
  width: 100%;
  height: 100%;
}

.drawing text {
  fill: #ddd;
  font: 16px "Liberation Mono", monospace;
}

.view {
  position: absolute;
  top: 6px;
  left: 4px;
  display: flex;
  gap: 2px;
  color: #ddd;
}

.docctl {
  position: absolute;
  top: 9px;
  right: 8px;
  display: flex;
  gap: 7px;
}

.docctl svg {
  width: 12px;
  height: 12px;
}

.cube {
  position: absolute;
  top: 39px;
  right: 15px;
  width: 76px;
  height: 76px;
  border: 8px solid #484e57;
  border-radius: 50%;
  color: #aaa;
}

.cube b {
  position: absolute;
  top: 14px;
  left: 14px;
  width: 33px;
  height: 33px;
  border: 7px solid #b5b5b5;
  background: #a3abb0;
  color: #555;
  text-align: center;
  font: 14px/19px "Noto Sans CJK SC", sans-serif;
}

.cube span {
  position: absolute;
}

.cube .n { top: -12px; left: 24px; }
.cube .s { bottom: -13px; left: 24px; }
.cube .w { top: 24px; left: -12px; }
.cube .e { top: 24px; right: -12px; }

.wcs {
  position: absolute;
  top: 132px;
  right: 28px;
  display: flex;
  align-items: center;
  justify-content: space-between;
  width: 48px;
  height: 17px;
  padding: 0 4px;
  border: 1px solid #a0a4b0;
  border-radius: 4px;
  background: #858995;
  color: #d2d5dd;
  font: 10px "Liberation Sans", sans-serif;
}

.wcs svg {
  width: 10px;
  height: 6px;
}

.navbar {
  position: absolute;
  top: 174px;
  right: 2px;
  border-radius: 4px;
  background: #565c63;
}

.navbar svg {
  width: 32px;
  height: 207px;
}

.ucs {
  position: absolute;
  bottom: 0;
  left: 0;
  width: 90px;
  height: 84px;
}

.ucs text {
  fill: #eee;
  font: 300 17px Lato, sans-serif;
}

/* layout tabs */
.layouts {
  display: flex;
  height: 16px;
  background: #d4d0c8;
  border-bottom: 1px solid #f5f5f5;
  line-height: 15px;
}

.layouts button {
  width: 14px;
  border: 1px solid #aaa;
  border-top-color: #fff;
}

.layouts svg {
  width: 12px;
  height: 12px;
}

.layouts a {
  position: relative;
  padding: 0 10px 0 5px;
}

.layouts a::after {
  content: "";
  position: absolute;
  top: 0;
  right: 0;
  width: 1px;
  height: 15px;
  background: #333;
  transform: skewX(-25deg);
}

.layouts a.active {
  padding: 0 10px;
  background: #212830;
  color: #fff;
  clip-path: polygon(0 0, 100% 0, 87% 100%, 12% 100%);
}

/* command line */
.command {
  display: flex;
  margin-top: 5px;
  background: #999;
}

.grip {
  width: 11px;
  height: 3px;
  margin: 3px 2px 0 1px;
  border-top: 1px dotted #222;
  border-bottom: 1px dotted #222;
}

.console {
  flex: 1;
  border-radius: 4px 0 0 4px;
  background: #c8c8c8;
  overflow: hidden;
  font: 12px/14px "Liberation Mono", "Noto Sans CJK SC", monospace;
  color: #111;
}

.console span {
  font-size: 13px;
}

.console p {
  height: 14px;
  margin: 0;
  padding-left: 2px;
}

.console p:first-child {
  margin-top: 1px;
}

.console label {
  display: flex;
  height: 18px;
  margin-top: 9px;
  padding: 2px 2px 0;
  border-top: 1px solid #777;
  background: #fff;
}

.console input {
  flex: 1;
  border: 0;
  padding: 0;
  outline: none;
  font: inherit;
}

/* status bar */
.status {
  display: flex;
  align-items: center;
  height: 25px;
  margin: 0 -2px 0 -4px;
  padding: 0 0 3px 9px;
  border-top: 2px solid #444;
  border-bottom: 1px solid #444;
  background: linear-gradient(#989898, #6c6c6c);
}

.num {
  font: 10px/14px "Liberation Mono", monospace;
}

.coords {
  margin-left: 10px;
}

.textheight {
  white-space: nowrap;
}

.toggles {
  display: grid;
  grid-template-columns: repeat(14, 1fr);
  width: 300px;
  margin-left: 46px;
}

.status button {
  display: flex;
  align-items: center;
  justify-content: center;
  height: 20px;
  border-right: 1px solid #777;
  background: linear-gradient(#bcbcbf, #a0a0a4);
}

.status button.on {
  border: 1px solid #6ea9bd;
  background: linear-gradient(#e8f8ff, #a5d8e8);
}

.status svg {
  width: 17px;
  height: 17px;
}

.space {
  display: flex;
  margin-left: 60px;
}

.space button {
  width: 21px;
}

.space button:first-child {
  width: 31px;
}

.gap {
  width: 18px;
}

.space button.scale {
  gap: 3px;
  width: 52px;
  font: 11px "Liberation Sans", sans-serif;
}

.space .scale ~ button {
  width: 26px;
}

/* windows taskbar */
.taskbar {
  display: flex;
  height: 43px;
  padding: 3px 2px 1px;
  border-top: 2px solid #f5f5f5;
  background: #d4d0c8;
  color: #000;
}

.taskbar button {
  display: flex;
  align-items: center;
  border: 1px solid;
  border-color: #fff #444 #444 #fff;
  box-shadow: inset -1px -1px #888;
  white-space: nowrap;
}

.start {
  width: 46px;
  margin-right: 9px;
}

.start svg {
  width: 17px;
  height: 17px;
}

.tasks {
  display: flex;
  flex: 1;
  gap: 2px;
}

.tasks button {
  flex: 1;
  gap: 5px;
  padding-left: 3px;
  min-width: 0;
}

.tasks svg {
  width: 31px;
  height: 31px;
}

.tasks button.current {
  border-color: #444 #fff #fff #444;
  box-shadow: inset 1px 1px #888;
  background: #fff;
  font: bold 11px "Liberation Mono", monospace;
}

.yi {
  width: 31px;
  height: 31px;
  border-radius: 6px;
  background: linear-gradient(#33a9ee, #167bd5);
  color: #fff;
  font: bold 22px/30px "Noto Sans CJK SC", sans-serif;
}

.sogou {
  width: 15px;
  height: 15px;
  margin: 9px 4px 0 13px;
  border-radius: 2px;
  background: #34b45a;
  color: #fff;
  text-align: center;
  font: bold 14px/15px "Liberation Sans", sans-serif;
}

.tray {
  display: flex;
  align-items: center;
  gap: 6px;
  width: 183px;
  margin-left: 7px;
  padding: 0 2px 0 4px;
  border: 1px solid;
  border-color: #888 #fff #fff #888;
  white-space: nowrap;
}

.tray svg {
  width: 17px;
  height: 17px;
}

.tray .chev {
  width: 10px;
  height: 14px;
}

.tray time {
  flex: 1;
  text-align: center;
  font: 10px/15px "Liberation Mono", "Noto Sans CJK SC", monospace;
}

/* input method bar */
.ime {
  position: absolute;
  right: 0;
  bottom: 44px;
  display: flex;
  align-items: center;
  justify-content: space-between;
  width: 140px;
  height: 20px;
  padding: 0 2px;
  background: #f7fbff;
  color: #347dbd;
  font: 17px "Liberation Sans", sans-serif;
}

.ime .s {
  width: 17px;
  border-radius: 4px;
  background: #35b558;
  color: #fff;
  text-align: center;
}

.ime svg {
  width: 17px;
  height: 17px;
}

.watermark {
  position: absolute;
  right: 55px;
  bottom: 22px;
  width: 178px;
  height: 85px;
  opacity: 0.75;
  color: #f5f5f5;
  white-space: nowrap;
  pointer-events: none;
}

.watermark svg {
  position: absolute;
  top: 0;
  left: 59px;
  width: 54px;
  height: 60px;
}

.brand {
  position: relative;
  display: flex;
  align-items: baseline;
  padding-top: 22px;
  font: bold 38px/38px "Liberation Sans", sans-serif;
  text-shadow: 0 0 2px #888;
}

.brand .du {
  margin-left: 7px;
  font-size: 24px;
  color: #888;
}

.brand .jy {
  margin-left: auto;
  font: bold 29px/38px "Noto Sans CJK SC", sans-serif;
}

.site {
  position: relative;
  text-align: center;
  font: 21px/22px "Liberation Sans", sans-serif;
  text-shadow: 0 0 2px #888;
}
```
